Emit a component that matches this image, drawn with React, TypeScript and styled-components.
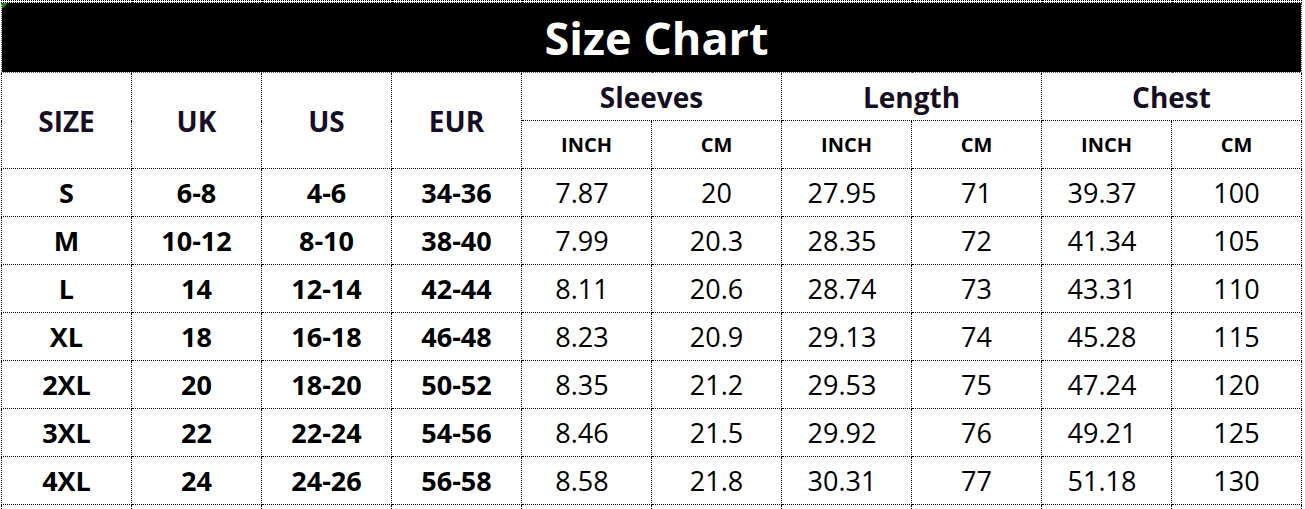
import React from 'react'
import styled, { createGlobalStyle } from 'styled-components'

const GlobalStyle = createGlobalStyle`
  html, body {
    margin: 0;
    padding: 0;
    background: #fff;
  }
  body {
    font-family: 'Open Sans', 'Noto Sans', Arial, sans-serif;
  }
`

const Sheet = styled.div`
  padding-left: 1px;
  width: 1305px;
  height: 509px;
  overflow: hidden;
  box-sizing: border-box;
`

const Grid = styled.table`
  border-collapse: collapse;
  table-layout: fixed;
  width: 1300px;
`

const Cell = styled.td<{ bold?: boolean; small?: boolean; inch?: boolean }>`
  border: 1px dotted #000;
  padding: 0 ${(p) => (p.inch ? '9px' : '0')} 0 0;
  text-align: center;
  vertical-align: middle;
  color: #000;
  font-size: ${(p) => (p.small ? '20px' : '27px')};
  font-weight: ${(p) => (p.bold ? 700 : 400)};
  white-space: nowrap;
`

const HeadCell = styled(Cell)`
  color: #160e22;
  font-size: ${(p) => (p.small ? '20px' : '28px')};
`

const TitleCell = styled.td`
  position: relative;
  border: 1px dotted #555;
  background: #000;
  color: #fff;
  font-size: 45px;
  font-weight: 700;
  text-align: center;
  vertical-align: middle;
  padding: 0 0 0 10px;
  height: 69px;

  &::before {
    content: '';
    position: absolute;
    left: 0;
    top: 0;
    border-top: 6px solid #1a8a1a;
    border-right: 6px solid transparent;
  }
`

const EdgeRow = styled.tr<{ h: number }>`
  height: ${(p) => p.h}px;
  & > td {
    border: 1px dotted #000;
    padding: 0;
  }
`

const Row = styled.tr<{ h?: number }>`
  height: ${(p) => p.h ?? 48}px;
`

const rows = [
  ['S', '6-8', '4-6', '34-36', '7.87', '20', '27.95', '71', '39.37', '100'],
  ['M', '10-12', '8-10', '38-40', '7.99', '20.3', '28.35', '72', '41.34', '105'],
  ['L', '14', '12-14', '42-44', '8.11', '20.6', '28.74', '73', '43.31', '110'],
  ['XL', '18', '16-18', '46-48', '8.23', '20.9', '29.13', '74', '45.28', '115'],
  ['2XL', '20', '18-20', '50-52', '8.35', '21.2', '29.53', '75', '47.24', '120'],
  ['3XL', '22', '22-24', '54-56', '8.46', '21.5', '29.92', '76', '49.21', '125'],
  ['4XL', '24', '24-26', '56-58', '8.58', '21.8', '30.31', '77', '51.18', '130'],
]

const blank = Array.from({ length: 10 }, (_, i) => i)

export default function App() {
  return (
    <>
      <GlobalStyle />
      <Sheet>
        <Grid>
          <colgroup>
            {blank.map((i) => (
              <col key={i} style={{ width: 130 }} />
            ))}
          </colgroup>
          <tbody>
            <EdgeRow h={2}>
              {blank.map((i) => (
                <td key={i} />
              ))}
            </EdgeRow>
            <tr>
              <TitleCell colSpan={10}>Size Chart</TitleCell>
            </tr>
            <Row>
              <HeadCell bold rowSpan={2}>SIZE</HeadCell>
              <HeadCell bold rowSpan={2}>UK</HeadCell>
              <HeadCell bold rowSpan={2}>US</HeadCell>
              <HeadCell bold rowSpan={2}>EUR</HeadCell>
              <HeadCell bold colSpan={2}>Sleeves</HeadCell>
              <HeadCell bold colSpan={2}>Length</HeadCell>
              <HeadCell bold colSpan={2}>Chest</HeadCell>
            </Row>
            <Row>
              {['INCH', 'CM', 'INCH', 'CM', 'INCH', 'CM'].map((t, i) => (
                <Cell key={i} bold small>
                  {t}
                </Cell>
              ))}
            </Row>
            {rows.map((r) => (
              <Row key={r[0]}>
                {r.map((v, i) => (
                  <Cell key={i} bold={i < 4} inch={i >= 4 && i % 2 === 0}>
                    {v}
                  </Cell>
                ))}
              </Row>
            ))}
            <EdgeRow h={10}>
              {blank.map((i) => (
                <td key={i} />
              ))}
            </EdgeRow>
          </tbody>
        </Grid>
      </Sheet>
    </>
  )
}
